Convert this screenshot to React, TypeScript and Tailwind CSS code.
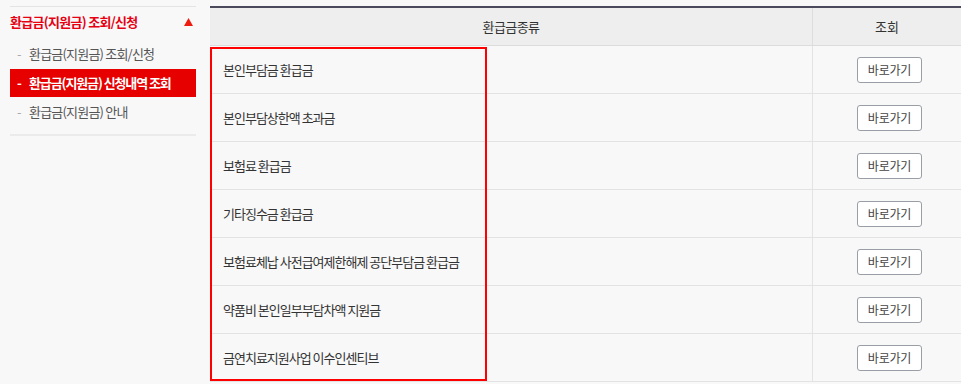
const subMenu = [
  { label: '환급금(지원금) 조회/신청', active: false },
  { label: '환급금(지원금) 신청내역 조회', active: true },
  { label: '환급금(지원금) 안내', active: false },
];

const refundTypes = [
  '본인부담금 환급금',
  '본인부담상한액 초과금',
  '보험료 환급금',
  '기타징수금 환급금',
  '보험료체납 사전급여제한해제 공단부담금 환급금',
  '약품비 본인일부부담차액 지원금',
  '금연치료지원사업 이수인센티브',
];

export default function App() {
  return (
    <div
      className="flex h-[384px] w-[961px] bg-[#f8f8f8] pt-[6px] text-[13px] text-[#333]"
      style={{ fontFamily: '"Noto Sans CJK KR", "Noto Sans", sans-serif' }}
    >
      {/* Side menu */}
      <aside className="ml-[10px] w-[186px] shrink-0">
        <div className="border-t border-[#e4e4e4]">
          <div className="flex h-[30px] items-center justify-between pr-[3px]">
            <span className="font-bold tracking-[-0.7px] text-[#e60012]">환급금(지원금) 조회/신청</span>
            <svg width="9" height="8" viewBox="0 0 9 8">
              <polygon points="4.5,0 9,8 0,8" fill="#f01b0f" />
            </svg>
          </div>
          <ul className="mt-[3px] flex flex-col gap-[1px] border-b-2 border-[#ebebeb] pb-[8px]">
            {subMenu.map((item) => (
              <li
                key={item.label}
                className={
                  item.active
                    ? 'flex h-[28px] items-center bg-[#e60000] pl-[7px] font-bold tracking-[-1.1px] text-white'
                    : 'flex h-[28px] items-center pl-[7px] tracking-[-0.8px] text-[#555]'
                }
              >
                <span className={item.active ? 'w-[12px] text-white' : 'w-[12px] text-[#aaa]'}>-</span>
                {item.label}
              </li>
            ))}
          </ul>
        </div>
      </aside>

      {/* Table */}
      <div className="relative ml-[14px] flex-1">
        <div className="border-t-2 border-[#4a4a5c]">
          <div className="flex h-[38px] border-b border-[#dcdcdc] bg-[#eeeeee]">
            <div className="flex w-[603px] items-center justify-center border-r border-[#dedede] tracking-[-0.6px]">
              환급금종류
            </div>
            <div className="flex flex-1 items-center justify-center">조회</div>
          </div>
          {refundTypes.map((name) => (
            <div key={name} className="flex h-[48px] border-b border-[#e3e3e3]">
              <div className="flex w-[603px] items-center border-r border-[#e3e3e3] pl-[13px] tracking-[-1px]">
                {name}
              </div>
              <div className="flex flex-1 items-center justify-center pl-[5px]">
                <button className="h-[26px] w-[65px] rounded-[3px] border border-[#9a9ea6] bg-white text-[12px] tracking-[-0.2px] text-[#444]">
                  바로가기
                </button>
              </div>
            </div>
          ))}
        </div>

        {/* Highlight box */}
        <div className="pointer-events-none absolute left-0 top-[41px] h-[334px] w-[277px] border-2 border-[#ff0000]" />
      </div>
    </div>
  );
}
